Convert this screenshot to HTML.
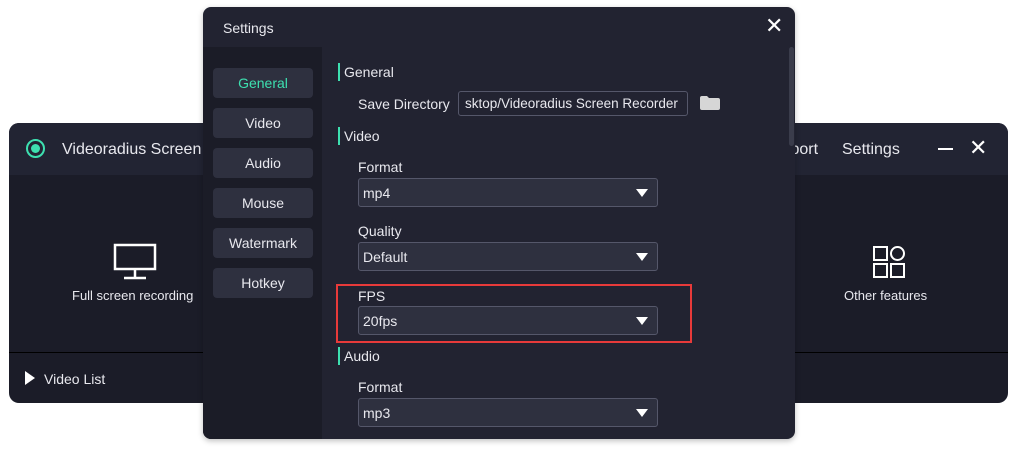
<!DOCTYPE html>
<html><head><meta charset="utf-8"><style>
*{margin:0;padding:0;box-sizing:border-box}
body{width:1022px;height:449px;background:#fff;position:relative;overflow:hidden;font-family:"Liberation Sans",sans-serif;color:#e8e8ee}
.abs{position:absolute}
.main{left:9px;top:123px;width:999px;height:280px;border-radius:10px;background:#1b1c28;overflow:hidden}
.mh{left:0;top:0;width:999px;height:52px;background:#222433}
.t{position:absolute;white-space:nowrap}
.dlg{left:203px;top:7px;width:592px;height:432px;border-radius:8px;background:#222331;overflow:hidden;box-shadow:0 2px 6px rgba(0,0,0,.25)}
.side{left:0;top:40px;width:119px;height:392px;background:#1b1c27}
.btn{position:absolute;left:10px;width:100px;height:30px;background:#2e303f;border-radius:4px;font-size:14px;text-align:center;line-height:30px;color:#e8e8ee}
.sec{position:absolute;left:135px;height:18px;border-left:2px solid #3de0b0;padding-left:4px;font-size:14px;line-height:18px}
.lbl{position:absolute;left:155px;font-size:14px}
.sel{position:absolute;left:155px;width:300px;height:29px;background:#2e303f;border:1px solid #55576a;border-radius:3px;font-size:14px;line-height:29px;padding-left:4px}
.sel:after{content:"";position:absolute;right:9px;top:10px;border-left:6px solid transparent;border-right:6px solid transparent;border-top:8px solid #fff}
</style></head><body>
<div class="abs main">
  <div class="abs mh"></div>
  <div class="abs" style="left:17px;top:16px;width:19px;height:19px;border:2px solid #3de0b0;border-radius:50%"></div>
  <div class="abs" style="left:22px;top:21px;width:9px;height:9px;background:#3de0b0;border-radius:50%"></div>
  <div class="t" style="left:53px;top:18px;font-size:16px">Videoradius Screen Recorder</div>
  <div class="t" style="left:753px;top:18px;font-size:16px">Support</div>
  <div class="t" style="left:833px;top:18px;font-size:16px">Settings</div>
  <div class="abs" style="left:929px;top:25px;width:15px;height:2px;background:#fff"></div>
  <div class="t" style="left:960px;top:12px;font-size:22px;color:#fff">✕</div>
  <svg class="abs" style="left:104px;top:120px" width="46" height="38"><rect x="2" y="2" width="40" height="24" fill="none" stroke="#fff" stroke-width="2.5"/><line x1="22" y1="26" x2="22" y2="34" stroke="#fff" stroke-width="2.5"/><line x1="11" y1="35" x2="33" y2="35" stroke="#fff" stroke-width="2.5"/></svg>
  <div class="t" style="left:63px;top:165px;font-size:13px">Full screen recording</div>
  <svg class="abs" style="left:863px;top:122px" width="36" height="36"><rect x="2" y="2" width="13" height="13" fill="none" stroke="#fff" stroke-width="2"/><circle cx="25.5" cy="8.5" r="6.5" fill="none" stroke="#fff" stroke-width="2"/><rect x="2" y="19" width="13" height="13" fill="none" stroke="#fff" stroke-width="2"/><rect x="19" y="19" width="13" height="13" fill="none" stroke="#fff" stroke-width="2"/></svg>
  <div class="t" style="left:835px;top:165px;font-size:13px">Other features</div>
  <div class="abs" style="left:0;top:229px;width:999px;height:1px;background:#000"></div>
  <div class="abs" style="left:16px;top:248px;border-top:7px solid transparent;border-bottom:7px solid transparent;border-left:10px solid #fff"></div>
  <div class="t" style="left:35px;top:248px;font-size:14px">Video List</div>
</div>
<div class="abs dlg">
  <div class="t" style="left:20px;top:13px;font-size:14px">Settings</div>
  <div class="t" style="left:562px;top:6px;font-size:22px;color:#fff">✕</div>
  <div class="abs side"></div>
  <div class="btn" style="top:61px;color:#3de0b0">General</div>
  <div class="btn" style="top:101px">Video</div>
  <div class="btn" style="top:141px">Audio</div>
  <div class="btn" style="top:181px">Mouse</div>
  <div class="btn" style="top:221px">Watermark</div>
  <div class="btn" style="top:261px">Hotkey</div>
  <div class="abs" style="left:586px;top:40px;width:5px;height:99px;background:#3a3c4b;border-radius:3px"></div>
  <div class="sec" style="top:56px">General</div>
  <div class="lbl" style="top:89px">Save Directory</div>
  <div class="abs" style="left:255px;top:84px;width:230px;height:25px;border:1px solid #55576a;border-radius:3px;font-size:13.5px;line-height:23px;padding-left:6px;white-space:nowrap;overflow:hidden">sktop/Videoradius Screen Recorder</div>
  <svg class="abs" style="left:496px;top:88px" width="22" height="16"><path d="M1 3 Q1 1 3 1 H8 L10 3 H19 Q21 3 21 5 V13 Q21 15 19 15 H3 Q1 15 1 13 Z" fill="#d6d6d6"/></svg>
  <div class="sec" style="top:120px">Video</div>
  <div class="lbl" style="top:152px">Format</div>
  <div class="sel" style="top:171px">mp4</div>
  <div class="lbl" style="top:216px">Quality</div>
  <div class="sel" style="top:235px">Default</div>
  <div class="abs" style="left:133px;top:277px;width:356px;height:59px;border:2px solid #e83a3a"></div>
  <div class="lbl" style="top:281px">FPS</div>
  <div class="sel" style="top:299px">20fps</div>
  <div class="sec" style="top:340px">Audio</div>
  <div class="lbl" style="top:372px">Format</div>
  <div class="sel" style="top:391px">mp3</div>
</div>
</body></html>
